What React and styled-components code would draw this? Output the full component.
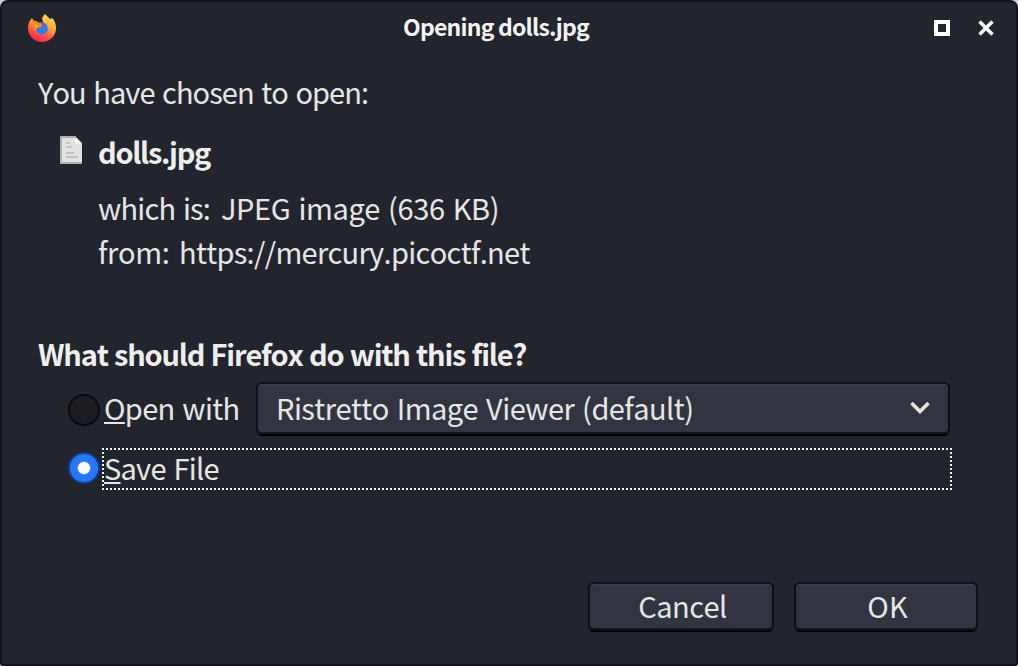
import React from "react";
import styled, { createGlobalStyle } from "styled-components";

const Global = createGlobalStyle`
  * { box-sizing: border-box; }
  body { margin: 0; background: #c9cdcc; }
`;

const Window = styled.div`
  width: 1018px;
  height: 666px;
  display: flex;
  flex-direction: column;
  overflow: hidden;
  background: #23252e;
  border: 2px solid #121318;
  border-radius: 8px 8px 3px 3px;
  color: #e6e6e4;
  font-family: "Noto Sans CJK SC", "Noto Sans", sans-serif;
  font-size: 29px;
  font-kerning: none;
`;

const TitleBar = styled.header`
  height: 52px;
  flex: none;
  display: grid;
  grid-template-columns: 95px 1fr 125px;
  align-items: center;
  padding: 0 22px 0 26px;
`;

const Controls = styled.div`
  display: flex;
  justify-content: flex-end;
  gap: 28px;
`;

const Text = styled.span`
  display: block;
  flex: none;
  white-space: pre;
  line-height: 44px;
  word-spacing: 2px;
  letter-spacing: ${(p) => p.$track || 0}px;
`;

const Strong = styled(Text)`
  font-size: 29px;
  font-weight: 700;
  word-spacing: 1px;
  color: #eeeeec;
`;

const Label = styled(Text)`
  line-height: 40px;
  padding-bottom: 4px;
`;

const OpenLabel = styled(Label)`
  width: 135px;
  margin-left: 4px;
`;

const Title = styled(Label)`
  font-size: 23px;
  font-weight: 700;
  word-spacing: 0;
  text-align: center;
  color: #f4f4f2;
`;

const Body = styled.main`
  flex: 1;
  display: flex;
  flex-direction: column;
  padding: 15px 38px 32px 36px;
`;

const FileRow = styled.div`
  display: flex;
  padding-left: 22px;
  margin-top: 16px;
  gap: 15px;
`;

const FileIcon = styled.svg`
  flex: none;
  margin-top: 7px;
`;

const Details = styled.div`
  display: flex;
  flex-direction: column;
  margin: 12px 0 58px 60px;
`;

const Detail = styled.div`
  display: grid;
  grid-template-columns: ${(p) => p.$label}px auto;
`;

const Choice = styled.label`
  display: flex;
  align-items: center;
  margin-left: 30px;
  height: ${(p) => p.$height}px;
  margin-top: ${(p) => p.$top}px;
`;

const Radio = styled.span`
  flex: none;
  width: 32px;
  height: 32px;
  margin: ${(p) => (p.$on ? "0 0 2px" : "2px 0 0")};
  border-radius: 50%;
  border: 2px solid ${(p) => (p.$on ? "#153f8c" : "#08090b")};
  background: ${(p) =>
    p.$on
      ? "radial-gradient(circle, #fff 5.5px, #2777ff 6.8px)"
      : "#1a1c21"};
`;

const Key = styled.span`
  text-decoration: underline 2px;
  text-underline-offset: 2px;
  text-decoration-skip-ink: none;
`;

const Raised = styled.div`
  background: #323541;
  border: 2px solid #101116;
  border-radius: 6px;
  box-shadow: inset 0 2px #3a3d49, inset 0 -2px #15161b;
  border-bottom-color: #000;
`;

const Select = styled(Raised)`
  flex: none;
  width: 694px;
  height: 54px;
  margin-left: 17px;
  padding: 0 18px 0 18px;
  display: flex;
  align-items: center;
  justify-content: space-between;
`;

const Chevron = styled.svg`
  flex: none;
  margin-bottom: 2px;
`;

const dots = "#f4f4f2 0 2px, transparent 2px 4px";
const Focus = styled.span`
  width: 850px;
  height: 42px;
  margin-left: 2px;
  padding-left: 2px;
  display: flex;
  align-items: center;
  background:
    repeating-linear-gradient(90deg, ${dots}) 0 0 / 100% 2px no-repeat,
    repeating-linear-gradient(90deg, ${dots}) 0 100% / 100% 2px no-repeat,
    repeating-linear-gradient(180deg, ${dots}) 0 0 / 2px 100% no-repeat,
    repeating-linear-gradient(180deg, ${dots}) 100% 0 / 2px 100% no-repeat;
`;

const Actions = styled.footer`
  display: flex;
  justify-content: flex-end;
  gap: 20px;
  margin-top: auto;
`;

const Button = styled(Raised).attrs({ as: "button" })`
  width: ${(p) => p.$width}px;
  height: 50px;
  padding: 0 0 0 3px;
  display: flex;
  align-items: center;
  justify-content: center;
  color: inherit;
  font: inherit;
`;

function Firefox() {
  return (
    <svg width="28" height="28" viewBox="0 0 28 28">
      <defs>
        <linearGradient id="flame" x1="0.75" y1="0.05" x2="0.3" y2="1">
          <stop offset="0" stopColor="#ffdc4b" />
          <stop offset="0.4" stopColor="#ffa13a" />
          <stop offset="0.7" stopColor="#ff5040" />
          <stop offset="1" stopColor="#f52358" />
        </linearGradient>
      </defs>
      <path d="M4 4l1.500 2.500L8 7l3 2 4-1-1-4 3-4 3 3 2 2 2-1c3 3 4 6 4 10A14 14 0 0 1 0 14c0-4 1-7 4-10z" fill="url(#flame)" />
      <path d="M9 9l6-1 4 3 1 5-3 4-5 .5-3.500-3z" fill="#3478ef" />
      <path d="M10 8l4 0 2 1 2 3-4-2z" fill="#7650ac" />
      <path d="M4 5l1.500 2L8 7l3 2 3 1-1 3-4 1-1 3c-3-2-5-6-4-12z" fill="#ff8a19" />
      <path d="M7 11l4 1-3 2z" fill="#ffc229" />
    </svg>
  );
}

export default function App() {
  return (
    <>
      <Global />
      <Window>
        <TitleBar>
          <Firefox />
          <Title $track={-0.8}>Opening dolls.jpg</Title>
          <Controls>
            <svg width="16" height="16">
              <rect x="2" y="2" width="12" height="12" fill="none" stroke="#fff" strokeWidth="4" />
            </svg>
            <svg width="16" height="16">
              <path d="M1.500 1.500L14.500 14.500M14.500 1.500L1.500 14.500" stroke="#f4f4f2" strokeWidth="3.600" />
            </svg>
          </Controls>
        </TitleBar>
        <Body>
          <Text $track={-0.95}>You have chosen to open:</Text>
          <FileRow>
            <FileIcon width="23" height="28" viewBox="0 0 23 28">
              <path d="M0 0H15L22 7V28H0z" fill="#e2e2e2" />
              <path d="M0 1H16M1 0V28M0 27H22" stroke="#b0b0b0" strokeWidth="2" />
              <path d="M15 2L22 8H15z" fill="#fff" />
              <path d="M6 7H10M6 11H12M6 17H14M6 21H18" stroke="#c4c4c4" strokeWidth="2" />
            </FileIcon>
            <Strong $track={-1.3}>dolls.jpg</Strong>
          </FileRow>
          <Details>
            <Detail $label={123}>
              <Text $track={-0.8}>which is:</Text>
              <Text $track={-0.4}>JPEG image (636 KB)</Text>
            </Detail>
            <Detail $label={81}>
              <Text $track={-0.35}>from:</Text>
              <Text $track={-0.68}>https://mercury.picoctf.net</Text>
            </Detail>
          </Details>
          <Strong $track={-1.2}>What should Firefox do with this file?</Strong>
          <Choice $height={54} $top={7}>
            <Radio />
            <OpenLabel $track={-0.68}><Key>O</Key>pen with</OpenLabel>
            <Select>
              <Label $track={-0.54}>Ristretto Image Viewer (default)</Label>
              <Chevron width="20" height="14">
                <path d="M1.500 2L10 10.500L18.500 2" fill="none" stroke="#e4e4e4" strokeWidth="3.600" />
              </Chevron>
            </Select>
          </Choice>
          <Choice $height={42} $top={12}>
            <Radio $on />
            <Focus>
              <Label $track={-0.75}><Key>S</Key>ave File</Label>
            </Focus>
          </Choice>
          <Actions>
            <Button $width={186}><Label $track={-0.5}>Cancel</Label></Button>
            <Button $width={184}><Label>OK</Label></Button>
          </Actions>
        </Body>
      </Window>
    </>
  );
}
